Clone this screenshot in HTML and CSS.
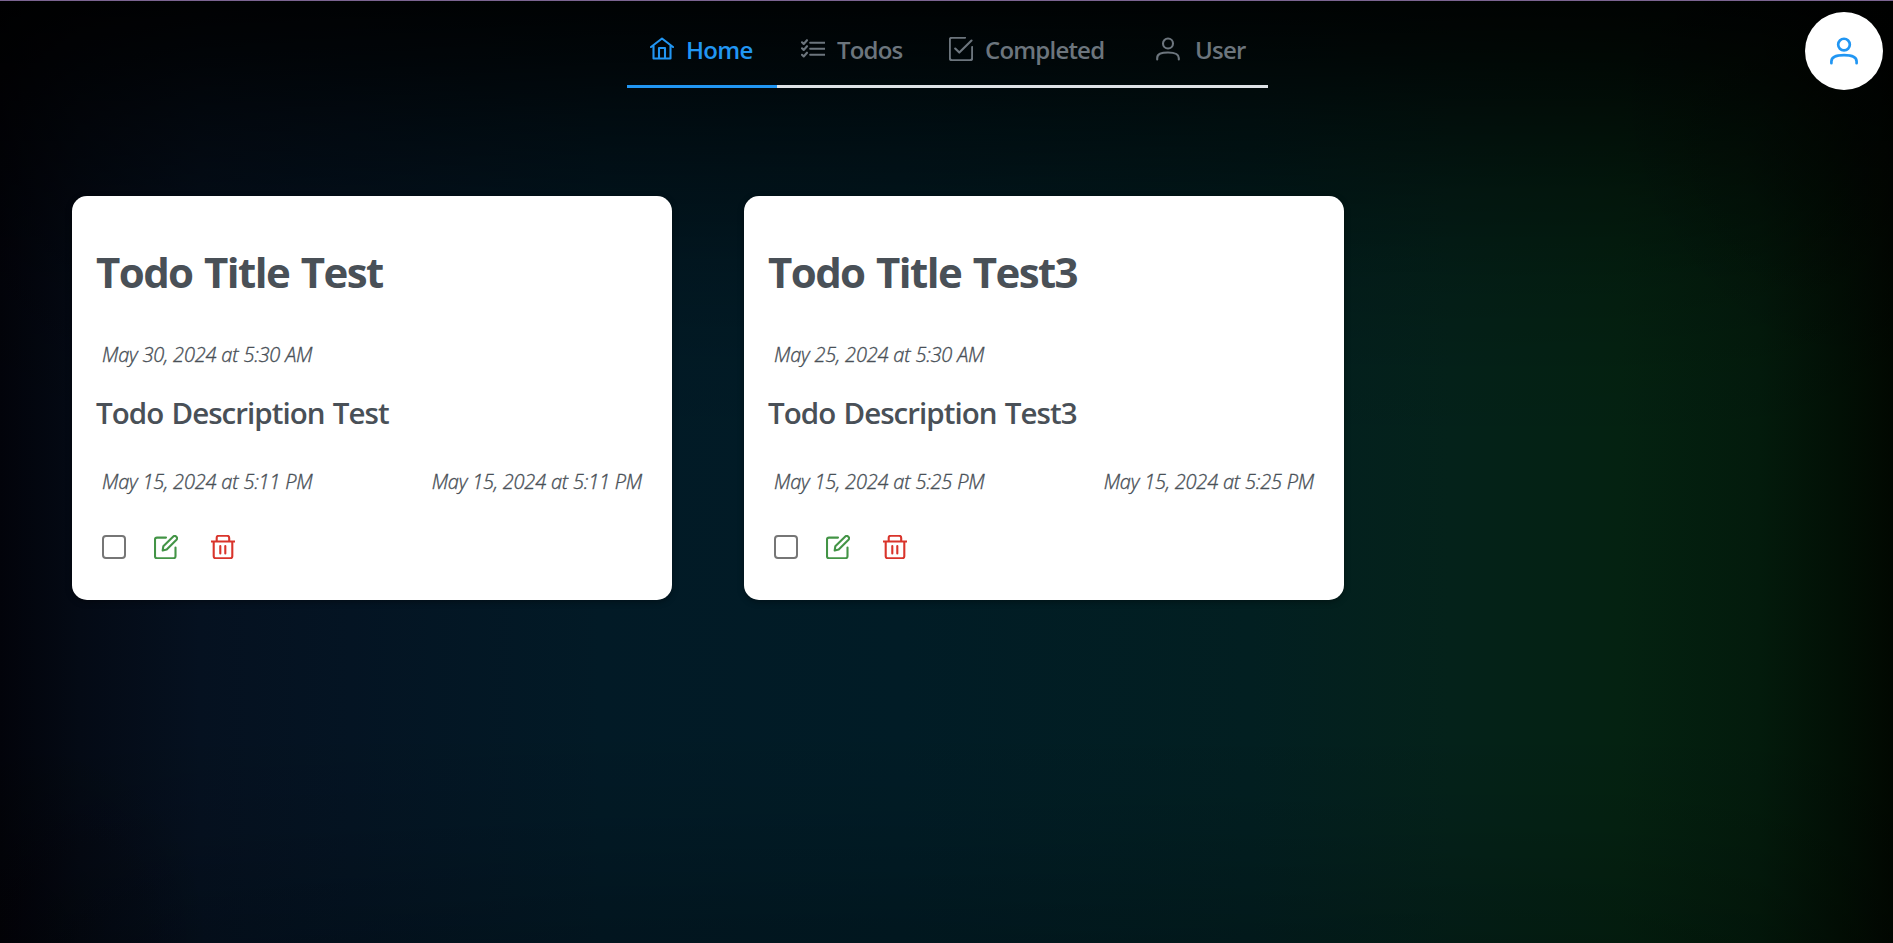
FILE: index.html
```html
<!DOCTYPE html>
<html lang="en">
<head>
<meta charset="utf-8">
<title>Todos</title>
<link rel="stylesheet" href="styles.css">
</head>
<body>
<svg class="sprite" aria-hidden="true">
  <symbol id="home" viewBox="0 0 24 24"><path d="M1 10 12 1.5 23 10M3.500 8.500V21.500H20.500V8.500M9 21.500V11H15V21.500"/></symbol>
  <symbol id="list" viewBox="0 0 24 24"><path d="M9.200 3.700H23.500M9.200 9.700H23.500M9.200 15.700H23.500M1 3.300 2.700 5 6 1.200M1 9.300 2.700 11 6 7.200M1 15.800 2.700 17.500 6 13.700"/></symbol>
  <symbol id="check" viewBox="0 0 24 24"><path d="M16 .8H3Q.8.800.8 3V21Q.8 23.200 3 23.200H21Q23.200 23.200 23.200 21V10M6.200 11.500 10.300 15.600 22.500 3.500"/></symbol>
  <symbol id="user" viewBox="0 0 24 24"><circle cx="12" cy="6.500" r="5"/><path d="M1.200 22.500V21C1.200 17 5 15.500 12 15.500S22.800 17 22.800 21V22.500"/></symbol>
  <symbol id="edit" viewBox="0 0 24 24"><path d="M12 2.600H3Q1 2.600 1 4.600V21.200Q1 23.200 3 23.200H19.500Q21.500 23.200 21.500 21.200V12.500M8.700 15.500 9.300 11.300 19.300 1.500Q20.300.600 21.500 1L23 2.500Q23.400 3.700 22.500 4.700L12.700 14.600Z"/></symbol>
  <symbol id="trash" viewBox="0 0 24 24"><path d="M.5 6.500H23.500M2.700 6.500V21.200Q2.700 23.200 4.700 23.200H19.300Q21.300 23.200 21.300 21.200V6.500M5.700 6.500V3Q5.700.800 7.900.800H16Q18.200.800 18.200 3V6.500M9.300 11V18.500M14.300 11V18.500"/></symbol>
</svg>
<header class="header">
  <nav class="tabs">
    <a class="tab tab-home active"><svg class="icon"><use href="#home"/></svg><span class="label">Home</span></a>
    <a class="tab tab-todos"><svg class="icon"><use href="#list"/></svg><span class="label">Todos</span></a>
    <a class="tab tab-completed"><svg class="icon"><use href="#check"/></svg><span class="label">Completed</span></a>
    <a class="tab tab-user"><svg class="icon"><use href="#user"/></svg><span class="label">User</span></a>
  </nav>
  <button class="avatar" aria-label="User"><svg class="avatar-icon"><use href="#user"/></svg></button>
</header>
<main class="cards">
  <article class="card">
    <h1 class="title">Todo Title Test</h1>
    <div class="dates due"><time class="date">May 30, 2024 at 5:30 AM</time></div>
    <h2 class="description">Todo Description Test</h2>
    <div class="dates"><time class="date">May 15, 2024 at 5:11 PM</time><time class="date">May 15, 2024 at 5:11 PM</time></div>
    <div class="actions"><span class="box"></span><svg class="action edit"><use href="#edit"/></svg><svg class="action trash"><use href="#trash"/></svg></div>
  </article>
  <article class="card">
    <h1 class="title">Todo Title Test3</h1>
    <div class="dates due"><time class="date">May 25, 2024 at 5:30 AM</time></div>
    <h2 class="description">Todo Description Test3</h2>
    <div class="dates"><time class="date">May 15, 2024 at 5:25 PM</time><time class="date">May 15, 2024 at 5:25 PM</time></div>
    <div class="actions"><span class="box"></span><svg class="action edit"><use href="#edit"/></svg><svg class="action trash"><use href="#trash"/></svg></div>
  </article>
</main>
</body>
</html>
```
FILE: styles.css
```css
* { box-sizing: border-box; }
body {
  margin: 0;
  height: 943px;
  overflow: hidden;
  border-top: 1px solid #7b6491;
  font-family: "Open Sans", "Noto Sans", sans-serif;
  color: #495057;
  background:
    radial-gradient(ellipse 300px 380px at 100% 0, rgba(0,0,0,.45), transparent),
    radial-gradient(ellipse 220px 220px at 0 100%, rgba(0,0,0,.25), transparent),
    linear-gradient(to bottom, rgba(0,0,0,.92) 0, rgba(0,0,0,.76) 60px, rgba(0,0,0,.56) 120px, rgba(0,0,0,.36) 190px, rgba(0,0,0,.15) 280px, rgba(0,0,0,.04) 370px, transparent 460px, transparent 720px, rgba(0,0,0,.06) 820px, rgba(0,0,0,.2) 943px),
    linear-gradient(to right, #02030a 0, #040a15 80px, #051120 200px, #041423 350px, #021a26 600px, #011c26 900px, #021f21 1250px, #04221a 1450px, #042211 1620px, #031b0c 1760px, #021005 1840px, #010801 1893px);
}
.sprite { display: none; }
svg { fill: none; stroke: currentColor; stroke-width: 2.100; stroke-linecap: round; stroke-linejoin: round; overflow: visible; }
.header { position: relative; display: flex; justify-content: center; padding-left: 2px; height: 195px; }
.tabs { display: flex; width: 641px; height: 87px; border-bottom: 3px solid #dee2e6; }
.tab {
  display: flex;
  align-items: flex-start;
  height: 87px;
  padding: 35px 0 0 23px;
  color: #6c757d;
  font-size: 24px;
  font-weight: 600;
  line-height: 27px;
  letter-spacing: -.8px;
}
.tab-home { width: 150px; }
.tab-todos { width: 149px; }
.tab-completed { width: 206px; }
.tab-user { width: 136px; }
.active { color: #2196f3; border-bottom: 3px solid #2196f3; letter-spacing: -.7px; }
.icon { width: 24px; height: 24px; margin-right: 12px; margin-top: 1px; }
.tab-todos .icon { margin-top: 3px; margin-left: 1px; }
.tab-user .icon { margin-right: 15px; }
.tab-user { padding-left: 24px; }
.label { white-space: nowrap; }
.avatar {
  position: absolute;
  top: 11px;
  right: 10px;
  display: grid;
  place-items: center;
  width: 78px;
  height: 78px;
  padding: 0;
  border: 0;
  border-radius: 50%;
  background: #fff;
  color: #2196f3;
}
.avatar-icon { width: 28px; height: 28px; stroke-width: 2.300; }
.cards { display: flex; gap: 72px; padding-left: 72px; }
.card { width: 600px; height: 404px; padding: 47px 24px 0; border-radius: 15px; background: #fff; box-shadow: 0 2px 6px rgba(0,0,0,.35); }
.title { margin: 0; height: 98px; font-size: 42px; line-height: 58px; font-weight: 700; letter-spacing: -1.600px; word-spacing: 2.300px; white-space: nowrap; }
.dates { display: flex; justify-content: space-between; padding: 0 6px; height: 27px; }
.date { font-size: 20px; line-height: 27px; font-style: italic; font-weight: 300; letter-spacing: -.2px; -webkit-text-stroke: .35px currentColor; white-space: nowrap; }
.description { margin: 25px 0 35px; font-size: 29.500px; line-height: 40px; font-weight: 600; letter-spacing: -.95px; word-spacing: 1.500px; white-space: nowrap; }
.actions { display: flex; align-items: center; height: 30px; margin-top: 37px; padding-left: 6px; }
.box { width: 24px; height: 24px; border: 2px solid #767676; border-radius: 4px; }
.action { width: 24px; height: 24px; }
.edit { margin-left: 28px; color: #439446; }
.trash { margin-left: 33px; color: #d9342b; }
```
